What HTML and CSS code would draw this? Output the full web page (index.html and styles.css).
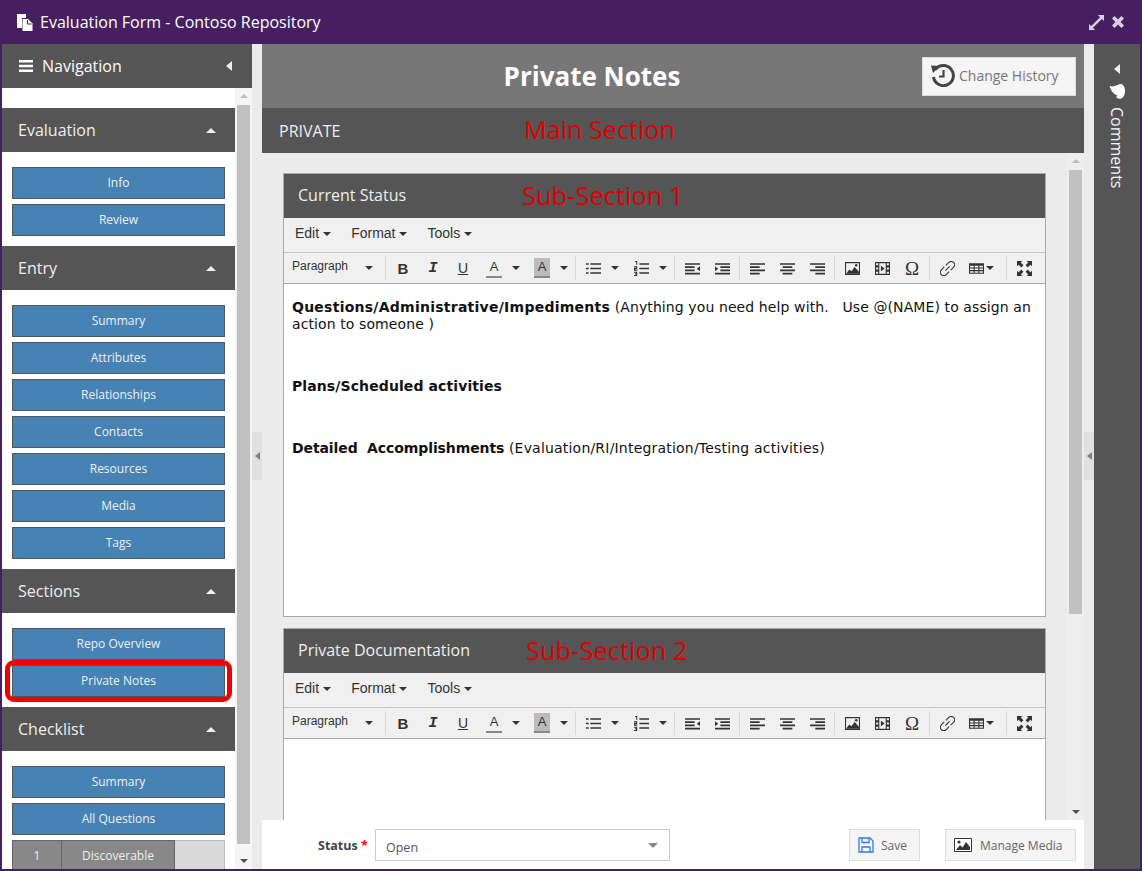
FILE: index.html
```html
<!DOCTYPE html>
<html lang="en">
<head>
    <meta charset="UTF-8">
    <meta name="viewport" content="width=device-width, initial-scale=1.0">
    <title>Evaluation Form - Contoso Repository</title>
    <link rel="stylesheet" href="styles.css">
</head>
<body>
    <!-- toolbar icons, used by both editors -->
    <svg class="sprite" width="0" height="0">
        <symbol id="i-bullets" viewBox="0 0 14 14"><path d="M0 2h2.500v1.600H0zM0 6.200h2.500v1.600H0zM0 10.400h2.500V12H0zM4 2h10v1.600H4zM4 6.200h10v1.600H4zM4 10.400h10V12H4z"/></symbol>
        <symbol id="i-numbers" viewBox="0 0 14 14"><path d="M5 2h9v1.600H5zM5 6.200h9v1.600H5zM5 10.400h9V12H5z"/><path d="M1 0h2v3.500H2V1H1zM0 5h3v2.500H1v.5h2v1H0V6.500h2V6H0zM0 10h3v4H0v-1h2v-.5H1v-1h1V11H0z"/></symbol>
        <symbol id="i-outdent" viewBox="0 0 14 14"><path d="M0 2h14v1.500H0zM0 5h9v1.500H0zM0 8h9v1.500H0zM0 11h14v1.500H0zM14 5v4.500L11 7.200z"/></symbol>
        <symbol id="i-indent" viewBox="0 0 14 14"><path d="M0 2h14v1.500H0zM5 5h9v1.500H5zM5 8h9v1.500H5zM0 11h14v1.500H0zM0 5v4.500l3-2.300z"/></symbol>
        <symbol id="i-left" viewBox="0 0 14 14"><path d="M0 2h14v1.500H0zM0 5h9v1.500H0zM0 8h14v1.500H0zM0 11h9v1.500H0z"/></symbol>
        <symbol id="i-center" viewBox="0 0 14 14"><path d="M0 2h14v1.500H0zM2.500 5h9v1.500h-9zM0 8h14v1.500H0zM2.500 11h9v1.500h-9z"/></symbol>
        <symbol id="i-right" viewBox="0 0 14 14"><path d="M0 2h14v1.500H0zM5 5h9v1.500H5zM0 8h14v1.500H0zM5 11h9v1.500H5z"/></symbol>
        <symbol id="i-image" viewBox="0 0 14 14"><path fill-rule="evenodd" d="M0 1h14v12H0zM1 2v10h12V2z"/><path d="M1 12l3-4 2 1.500 3-4 4 4.500v2z"/><circle cx="10.500" cy="4" r="1.200"/></symbol>
        <symbol id="i-media" viewBox="0 0 14 14"><path fill-rule="evenodd" d="M0 1h14v12H0zM1 2v2h2V2zM1 6v2h2V6zM1 10v2h2v-2zM11 2v2h2V2zM11 6v2h2V6zM11 10v2h2v-2zM4 2v10h6V2z"/><path d="M5.500 4.500v5l3.500-2.500z"/></symbol>
        <symbol id="i-link" viewBox="0 0 14 14"><path fill="none" stroke="currentColor" d="M5.500 4l2.700-2.700a2.300 2.300 0 0 1 4.500 4.500L10 8.500M8.500 10l-2.700 2.700A2.300 2.300 0 0 1 1.300 8.200L4 5.500M5 9l4-4"/></symbol>
        <symbol id="i-table" viewBox="0 0 14 14"><path fill-rule="evenodd" d="M0 2h14v10H0zM1 4.500v1.500h3.300V4.500zM5.300 4.500v1.500h3.400V4.500zM9.700 4.500v1.500H13V4.500zM1 7v1.500h3.300V7zM5.300 7v1.500h3.400V7zM9.700 7v1.500H13V7zM1 9.500V11h3.300V9.500zM5.300 9.500V11h3.400V9.500zM9.700 9.500V11H13V9.500z"/></symbol>
        <symbol id="i-full" viewBox="0 0 14 14"><path d="M0 0h5L3.500 1.500 6 4 4 6 1.500 3.500 0 5zM14 0v5l-1.500-1.500L10 6 8 4l2.500-2.500L9 0zM0 14V9l1.500 1.500L4 8l2 2-2.500 2.500L5 14zM14 14H9l1.500-1.500L8 10l2-2 2.500 2.500L14 9z"/></symbol>
    </svg>

    <div class="window">
        <header class="titlebar">
            <svg class="title-icon" viewBox="0 0 17 17" width="17" height="17"><path d="M1 0h9v4H6v10H1z" fill="#fff"/><path d="M6.500 5h5.500l4.500 4.500V17h-10z" fill="#fff"/><path d="M11.500 6v4h4" fill="none" stroke="#451f60"/></svg>
            <span class="title-text">Evaluation Form - Contoso Repository</span>
            <svg class="win-icon" viewBox="0 0 16 16" width="15" height="15" fill="#d9cfe0"><path d="M16 0v6.500L13.700 4.200 4.200 13.700 6.500 16H0V9.500l2.300 2.300 9.500-9.500L9.500 0z"/></svg>
            <svg class="win-icon" viewBox="0 0 14 14" width="12" height="12" fill="#d9cfe0"><path d="M3 0l4 4 4-4 3 3-4 4 4 4-3 3-4-4-4 4-3-3 4-4-4-4z"/></svg>
        </header>

        <div class="columns">
            <aside class="nav">
                <div class="nav-head">
                    <svg viewBox="0 0 14 12" width="14" height="12" fill="#fff"><path d="M0 0h14v2.400H0zM0 4.800h14v2.400H0zM0 9.600h14V12H0z"/></svg>
                    <span class="nav-head-text">Navigation</span>
                    <span class="arrow-left"></span>
                </div>
                <div class="nav-body">
                    <div class="nav-scroll">
                        <div class="nav-group">
                            <div class="nav-group-head">Evaluation<span class="arrow-up"></span></div>
                            <div class="nav-btns">
                                <a class="nav-btn">Info</a>
                                <a class="nav-btn">Review</a>
                            </div>
                        </div>
                        <div class="nav-group">
                            <div class="nav-group-head">Entry<span class="arrow-up"></span></div>
                            <div class="nav-btns">
                                <a class="nav-btn">Summary</a>
                                <a class="nav-btn">Attributes</a>
                                <a class="nav-btn">Relationships</a>
                                <a class="nav-btn">Contacts</a>
                                <a class="nav-btn">Resources</a>
                                <a class="nav-btn">Media</a>
                                <a class="nav-btn">Tags</a>
                            </div>
                        </div>
                        <div class="nav-group">
                            <div class="nav-group-head">Sections<span class="arrow-up"></span></div>
                            <div class="nav-btns">
                                <a class="nav-btn">Repo Overview</a>
                                <a class="nav-btn nav-btn-marked">Private Notes</a>
                            </div>
                        </div>
                        <div class="nav-group">
                            <div class="nav-group-head">Checklist<span class="arrow-up"></span></div>
                            <div class="nav-btns">
                                <a class="nav-btn">Summary</a>
                                <a class="nav-btn">All Questions</a>
                                <div class="check-row">
                                    <span class="check-num">1</span>
                                    <span class="check-name">Discoverable</span>
                                    <span class="check-rest"></span>
                                </div>
                            </div>
                        </div>
                    </div>
                    <div class="scrollbar nav-bar">
                        <span class="sb-up"></span>
                        <span class="sb-thumb"></span>
                        <span class="sb-down"></span>
                    </div>
                </div>
            </aside>

            <div class="gutter"><span class="gutter-tab"><span class="arrow-small"></span></span></div>

            <main class="main">
                <div class="page-head">
                    <h1 class="page-title">Private Notes</h1>
                    <button class="history-btn">
                        <svg viewBox="0 0 24 24" width="24" height="24" fill="none" stroke="#444" stroke-width="3"><path d="M4.500 6.500A10 10 0 1 1 2.500 14"/><path d="M0 2.500l9 .5-7 7z" fill="#444" stroke="none"/><path d="M12.500 7v6.500H8" stroke-width="2.200"/></svg>
                        Change History
                    </button>
                </div>
                <div class="main-section">PRIVATE<span class="note note-main">Main Section</span></div>

                <div class="main-body">
                    <div class="main-scroll">
                        <section class="sub">
                            <div class="sub-head">Current Status<span class="note note-one">Sub-Section 1</span></div>
                            <div class="menubar">
                                <span class="menu">Edit<i class="caret"></i></span>
                                <span class="menu">Format<i class="caret"></i></span>
                                <span class="menu">Tools<i class="caret"></i></span>
                            </div>
                            <div class="toolbar">
                                <div class="tb-group tb-format"><span class="tb-para">Paragraph</span><i class="caret"></i></div>
                                <div class="tb-group tb-color">
                                    <span class="tool tool-b">B</span><span class="tool tool-i">I</span><span class="tool tool-u">U</span>
                                    <span class="tool tool-split"><span class="tool-a">A</span><i class="caret"></i></span>
                                    <span class="tool tool-split"><span class="tool-a tool-a-bg">A</span><i class="caret"></i></span>
                                </div>
                                <div class="tb-group tb-list">
                                    <span class="tool tool-split"><svg class="ic"><use href="#i-bullets"/></svg><i class="caret"></i></span>
                                    <span class="tool tool-split"><svg class="ic"><use href="#i-numbers"/></svg><i class="caret"></i></span>
                                </div>
                                <div class="tb-group">
                                    <span class="tool"><svg class="ic"><use href="#i-outdent"/></svg></span>
                                    <span class="tool"><svg class="ic"><use href="#i-indent"/></svg></span>
                                </div>
                                <div class="tb-group">
                                    <span class="tool"><svg class="ic"><use href="#i-left"/></svg></span>
                                    <span class="tool"><svg class="ic"><use href="#i-center"/></svg></span>
                                    <span class="tool"><svg class="ic"><use href="#i-right"/></svg></span>
                                </div>
                                <div class="tb-group">
                                    <span class="tool"><svg class="ic"><use href="#i-image"/></svg></span>
                                    <span class="tool"><svg class="ic"><use href="#i-media"/></svg></span>
                                    <span class="tool tool-omega">Ω</span>
                                </div>
                                <div class="tb-group">
                                    <span class="tool"><svg class="ic"><use href="#i-link"/></svg></span>
                                    <span class="tool tool-table"><svg class="ic"><use href="#i-table"/></svg><i class="caret"></i></span>
                                </div>
                                <div class="tb-group tb-last">
                                    <span class="tool"><svg class="ic"><use href="#i-full"/></svg></span>
                                </div>
                            </div>
                            <div class="editor">
                                <p class="ed-first"><b>Questions/Administrative/Impediments</b> <span>(Anything you need help with. &nbsp; Use @(NAME) to assign an action to someone )</span></p>
                                <p class="ed-next ed-plans"><b>Plans/Scheduled activities</b></p>
                                <p class="ed-next ed-detail"><b>Detailed &nbsp;Accomplishments</b> <span>(Evaluation/RI/Integration/Testing activities)</span></p>
                            </div>
                        </section>

                        <section class="sub">
                            <div class="sub-head">Private Documentation<span class="note note-two">Sub-Section 2</span></div>
                            <div class="menubar">
                                <span class="menu">Edit<i class="caret"></i></span>
                                <span class="menu">Format<i class="caret"></i></span>
                                <span class="menu">Tools<i class="caret"></i></span>
                            </div>
                            <div class="toolbar">
                                <div class="tb-group tb-format"><span class="tb-para">Paragraph</span><i class="caret"></i></div>
                                <div class="tb-group tb-color">
                                    <span class="tool tool-b">B</span><span class="tool tool-i">I</span><span class="tool tool-u">U</span>
                                    <span class="tool tool-split"><span class="tool-a">A</span><i class="caret"></i></span>
                                    <span class="tool tool-split"><span class="tool-a tool-a-bg">A</span><i class="caret"></i></span>
                                </div>
                                <div class="tb-group tb-list">
                                    <span class="tool tool-split"><svg class="ic"><use href="#i-bullets"/></svg><i class="caret"></i></span>
                                    <span class="tool tool-split"><svg class="ic"><use href="#i-numbers"/></svg><i class="caret"></i></span>
                                </div>
                                <div class="tb-group">
                                    <span class="tool"><svg class="ic"><use href="#i-outdent"/></svg></span>
                                    <span class="tool"><svg class="ic"><use href="#i-indent"/></svg></span>
                                </div>
                                <div class="tb-group">
                                    <span class="tool"><svg class="ic"><use href="#i-left"/></svg></span>
                                    <span class="tool"><svg class="ic"><use href="#i-center"/></svg></span>
                                    <span class="tool"><svg class="ic"><use href="#i-right"/></svg></span>
                                </div>
                                <div class="tb-group">
                                    <span class="tool"><svg class="ic"><use href="#i-image"/></svg></span>
                                    <span class="tool"><svg class="ic"><use href="#i-media"/></svg></span>
                                    <span class="tool tool-omega">Ω</span>
                                </div>
                                <div class="tb-group">
                                    <span class="tool"><svg class="ic"><use href="#i-link"/></svg></span>
                                    <span class="tool tool-table"><svg class="ic"><use href="#i-table"/></svg><i class="caret"></i></span>
                                </div>
                                <div class="tb-group tb-last">
                                    <span class="tool"><svg class="ic"><use href="#i-full"/></svg></span>
                                </div>
                            </div>
                            <div class="editor"></div>
                        </section>
                    </div>
                    <div class="scrollbar main-bar">
                        <span class="sb-up"></span>
                        <span class="sb-thumb"></span>
                        <span class="sb-down"></span>
                    </div>
                </div>

                <div class="form-foot">
                    <label class="status-label">Status <span class="req">*</span></label>
                    <div class="status-select">Open<span class="select-arrow"></span></div>
                    <button class="foot-btn foot-save">
                        <svg viewBox="0 0 16 16" width="16" height="16" fill="none" stroke="#2f7de1" stroke-width="1.300"><path d="M1 1h11l3 3v11H1z"/><path d="M4 1v4.500h7V1M4 15v-5h8v5"/></svg>
                        Save
                    </button>
                    <button class="foot-btn foot-media">
                        <svg viewBox="0 0 18 14" width="18" height="14"><path d="M.5.500h17v13H.5z" fill="#fff" stroke="#333"/><path d="M2 12l4-5 2.500 2.500L12 4l4 5v3z" fill="#333"/><circle cx="5" cy="4" r="1.600" fill="#333"/></svg>
                        Manage Media
                    </button>
                </div>
            </main>

            <div class="gutter"><span class="gutter-tab"><span class="arrow-small"></span></span></div>

            <aside class="comments">
                <span class="arrow-left arrow-comments"></span>
                <svg viewBox="0 0 16 16" width="16" height="16" fill="#fff"><path d="M16 8c0 4-2 7-4 7.500-2 .5-4 0-5-2 1 0 1.500-.5 1.500-1C5 12 1.500 7 .5 3 4 4.500 8 2 11 1c3-.5 5 3 5 7z"/></svg>
                <span class="comments-text">Comments</span>
            </aside>
        </div>
    </div>
</body>
</html>
```

FILE: styles.css
```css
* {
    box-sizing: border-box;
}

body {
    margin: 0;
    height: 871px;
    overflow: hidden;
    background-color: #451f60;
    font-family: "Open Sans", sans-serif;
    color: #333;
}

.sprite {
    position: absolute;
}

.window {
    display: flex;
    flex-direction: column;
    height: 871px;
    padding: 0 2px 2px;
}

/* title bar */
.titlebar {
    display: flex;
    align-items: center;
    height: 44px;
    flex-shrink: 0;
    padding: 0 16px 0 14px;
    color: #fff;
}

.title-icon {
    margin-right: 7px;
}

.title-text {
    flex: 1;
    font-size: 16px;
}

.win-icon {
    margin-left: 8px;
}

.columns {
    display: flex;
    flex: 1;
    min-height: 0;
    background-color: #ebebeb;
}

/* left nav */
.nav {
    display: flex;
    flex-direction: column;
    width: 250px;
    flex-shrink: 0;
    background-color: #fff;
}

.nav-head {
    display: flex;
    align-items: center;
    height: 44px;
    flex-shrink: 0;
    padding: 0 20px 0 17px;
    background-color: #555;
    color: #fff;
    font-size: 16px;
}

.nav-head-text {
    flex: 1;
    margin-left: 9px;
}

.arrow-left {
    width: 0;
    height: 0;
    border-top: 5px solid transparent;
    border-bottom: 5px solid transparent;
    border-right: 6px solid #eee;
}

.nav-body {
    display: flex;
    flex: 1;
    min-height: 0;
}

.nav-scroll {
    width: 233px;
    padding-top: 20px;
    overflow: hidden;
}

.nav-group-head {
    display: flex;
    align-items: center;
    justify-content: space-between;
    height: 44px;
    padding: 0 19px 0 16px;
    background-color: #555;
    color: #eee;
    font-size: 16px;
}

.arrow-up {
    width: 0;
    height: 0;
    border-left: 5px solid transparent;
    border-right: 5px solid transparent;
    border-bottom: 5px solid #eee;
}

.nav-btns {
    display: flex;
    flex-direction: column;
    gap: 5px;
    padding: 15px 10px 10px;
}

.nav-btn {
    display: block;
    height: 32px;
    border: 1px solid #555;
    background-color: #4682b4;
    color: #f0f0f0;
    font-size: 12px;
    line-height: 30px;
    text-align: center;
}

/* red box that was drawn on the screenshot */
.nav-btn-marked {
    position: relative;
}

.nav-btn-marked::after {
    content: "";
    position: absolute;
    top: -6px;
    left: -8px;
    right: -8px;
    bottom: -6px;
    border: 5px solid #f00000;
    border-radius: 9px;
}

.check-row {
    display: flex;
    height: 32px;
    font-size: 12px;
    line-height: 30px;
    text-align: center;
    color: #eee;
}

.check-num {
    width: 50px;
    background-color: #888;
    border: 1px solid #666;
}

.check-name {
    width: 114px;
    margin-left: -1px;
    background-color: #888;
    border: 1px solid #666;
}

.check-rest {
    flex: 1;
    background-color: #d9d9d9;
    border: 1px solid #bbb;
    border-left: 0;
}

/* scrollbars */
.scrollbar {
    display: flex;
    flex-direction: column;
    align-items: center;
    width: 17px;
    flex-shrink: 0;
    background-color: #f5f5f5;
}

.sb-up,
.sb-down {
    width: 0;
    height: 0;
    flex-shrink: 0;
    border-left: 4px solid transparent;
    border-right: 4px solid transparent;
}

.sb-up {
    margin-top: 6px;
    border-bottom: 4px solid #bbb;
}

.sb-down {
    margin-bottom: 6px;
    border-top: 4px solid #505050;
}

.sb-thumb {
    width: 13px;
    flex: 1;
    background-color: #c1c1c1;
}

.nav-bar .sb-thumb {
    margin: 7px 0 15px;
}

.main-bar {
    background-color: #eee;
}

.main-bar .sb-thumb {
    margin: 7px 0 196px;
}

/* gutters with collapse tabs */
.gutter {
    display: flex;
    align-items: center;
    width: 10px;
    flex-shrink: 0;
}

.gutter-tab {
    display: flex;
    align-items: center;
    justify-content: center;
    width: 10px;
    height: 48px;
    margin-top: -1px;
    background-color: #e0e0e0;
}

.arrow-small {
    width: 0;
    height: 0;
    border-top: 4px solid transparent;
    border-bottom: 4px solid transparent;
    border-right: 5px solid #808080;
}

/* main column */
.main {
    display: flex;
    flex-direction: column;
    flex: 1;
    min-width: 0;
}

.page-head {
    display: flex;
    align-items: center;
    height: 64px;
    flex-shrink: 0;
    padding-right: 8px;
    background-color: #777;
}

.page-title {
    flex: 1;
    margin: -1px 0 0;
    color: #fff;
    font-size: 26px;
    font-weight: 700;
    text-align: center;
}

.history-btn {
    display: flex;
    align-items: center;
    gap: 4px;
    width: 154px;
    height: 39px;
    padding: 0 0 2px 8px;
    border: 1px solid #ddd;
    background-color: #f5f5f5;
    color: #777;
    font-family: inherit;
    font-size: 14px;
}

.main-section {
    position: relative;
    height: 45px;
    flex-shrink: 0;
    padding-left: 17px;
    background-color: #555;
    color: #eee;
    font-size: 16px;
    line-height: 46px;
}

/* red labels that were drawn on the screenshot */
.note {
    position: absolute;
    color: #e00000;
    font-size: 25.500px;
    line-height: 32px;
    white-space: nowrap;
}

.note-main {
    top: 5px;
    left: 262px;
    font-size: 25.200px;
}

.note-one {
    top: 5px;
    left: 238px;
}

.note-two {
    top: 5px;
    left: 242px;
}

.main-body {
    display: flex;
    flex: 1;
    min-height: 0;
}

.main-scroll {
    flex: 1;
    min-width: 0;
    padding: 20px 21px 0;
    overflow: hidden;
}

.sub {
    margin-bottom: 11px;
    border: 1px solid #aaa;
    background-color: #fff;
}

.sub-head {
    position: relative;
    height: 44px;
    padding-left: 14px;
    background-color: #555;
    color: #eee;
    font-size: 16px;
    line-height: 43px;
}

.menubar {
    display: flex;
    height: 34px;
    padding-left: 11px;
    background-color: #f0f0f0;
    font-family: "Liberation Sans", sans-serif;
    font-size: 14px;
    line-height: 31px;
    color: #333;
}

.menu {
    margin-right: 20px;
}

.caret {
    display: inline-block;
    flex-shrink: 0;
    width: 0;
    height: 0;
    margin-left: 4px;
    vertical-align: middle;
    border-left: 4px solid transparent;
    border-right: 4px solid transparent;
    border-top: 4px solid #333;
}

.toolbar {
    display: flex;
    align-items: center;
    height: 32px;
    border-top: 1px solid #c5c5c5;
    border-bottom: 1px solid #aaa;
    background-color: #f0f0f0;
    font-family: "Liberation Sans", sans-serif;
}

.tb-group {
    display: flex;
    align-items: center;
    height: 24px;
    padding: 0 2px;
    border-right: 1px solid #d9d9d9;
}

.tb-color {
    padding-right: 1px;
}

.tb-list {
    padding-right: 0;
}

.tb-last {
    border-right: 0;
}

.tb-format {
    width: 102px;
    padding-left: 8px;
    font-size: 12px;
}

.tb-para {
    flex: 1;
    margin-top: -5px;
    color: #333;
}

.tb-format .caret {
    margin-right: 10px;
}

.tool {
    display: flex;
    align-items: center;
    justify-content: center;
    width: 30px;
    height: 24px;
    color: #333;
    font-size: 14px;
}

.tool-b {
    font-size: 15px;
    font-weight: 700;
}

.tool-i {
    font-family: "Liberation Mono", monospace;
    font-size: 15px;
    font-style: italic;
    font-weight: 700;
}

.tool-u {
    text-decoration: underline;
}

.tool-split {
    width: 48px;
    justify-content: flex-start;
    padding-left: 8px;
}

.tool-split .caret {
    margin-left: 10px;
}

.tool-a {
    display: block;
    width: 16px;
    height: 20px;
    border-bottom: 2px solid #888;
    font-size: 13px;
    line-height: 18px;
    text-align: center;
}

.tool-a-bg {
    background-color: #bbb;
}

.ic {
    flex-shrink: 0;
    width: 15px;
    height: 15px;
    fill: #333;
    color: #333;
}

.tool-omega {
    padding-top: 1px;
    font-family: "Liberation Serif", serif;
    font-size: 19px;
}

.tool-table {
    width: 42px;
    justify-content: flex-start;
    padding-left: 7px;
}

.tool-table .caret {
    margin-left: 2px;
}

.editor {
    height: 332px;
    padding: 15px 8px 0;
    background-color: #fff;
    color: #111;
    font-family: "DejaVu Sans", sans-serif;
    font-size: 14px;
    letter-spacing: 0.2px;
    line-height: 17px;
}

.editor p {
    margin: 0;
}

.editor .ed-next {
    margin-top: 45px;
}

.ed-first b {
    letter-spacing: 0.25px;
}

.ed-first span {
    letter-spacing: 0.1px;
}

.ed-plans b {
    letter-spacing: 0.1px;
}

.ed-detail b {
    letter-spacing: -0.1px;
}

/* bottom form bar */
.form-foot {
    display: flex;
    align-items: flex-start;
    height: 49px;
    flex-shrink: 0;
    padding: 9px 8px 0 56px;
    background-color: #fff;
}

.status-label {
    width: 57px;
    margin-top: 8px;
    font-size: 12.500px;
    font-weight: 700;
    color: #444;
}

.req {
    color: #f00;
}

.status-select {
    position: relative;
    width: 295px;
    height: 32px;
    padding-left: 10px;
    border: 1px solid #ccc;
    color: #555;
    font-size: 12.500px;
    line-height: 35px;
}

.select-arrow {
    position: absolute;
    top: 13px;
    right: 11px;
    width: 0;
    height: 0;
    border-left: 5px solid transparent;
    border-right: 5px solid transparent;
    border-top: 5px solid #888;
}

.foot-btn {
    display: flex;
    align-items: center;
    height: 32px;
    padding: 0 0 0 8px;
    border: 1px solid #ddd;
    background-color: #f5f5f5;
    color: #666;
    font-family: inherit;
    font-size: 12px;
}

.foot-save {
    gap: 7px;
    width: 71px;
    margin-left: auto;
}

.foot-media {
    gap: 8px;
    width: 131px;
    margin-left: 25px;
}

/* comments rail */
.comments {
    display: flex;
    flex-direction: column;
    align-items: center;
    width: 46px;
    flex-shrink: 0;
    padding-top: 20px;
    background-color: #555;
    color: #f5f5f5;
}

.arrow-comments {
    margin-bottom: 9px;
}

.comments-text {
    margin-top: 8px;
    writing-mode: vertical-rl;
    font-size: 16px;
}
```
